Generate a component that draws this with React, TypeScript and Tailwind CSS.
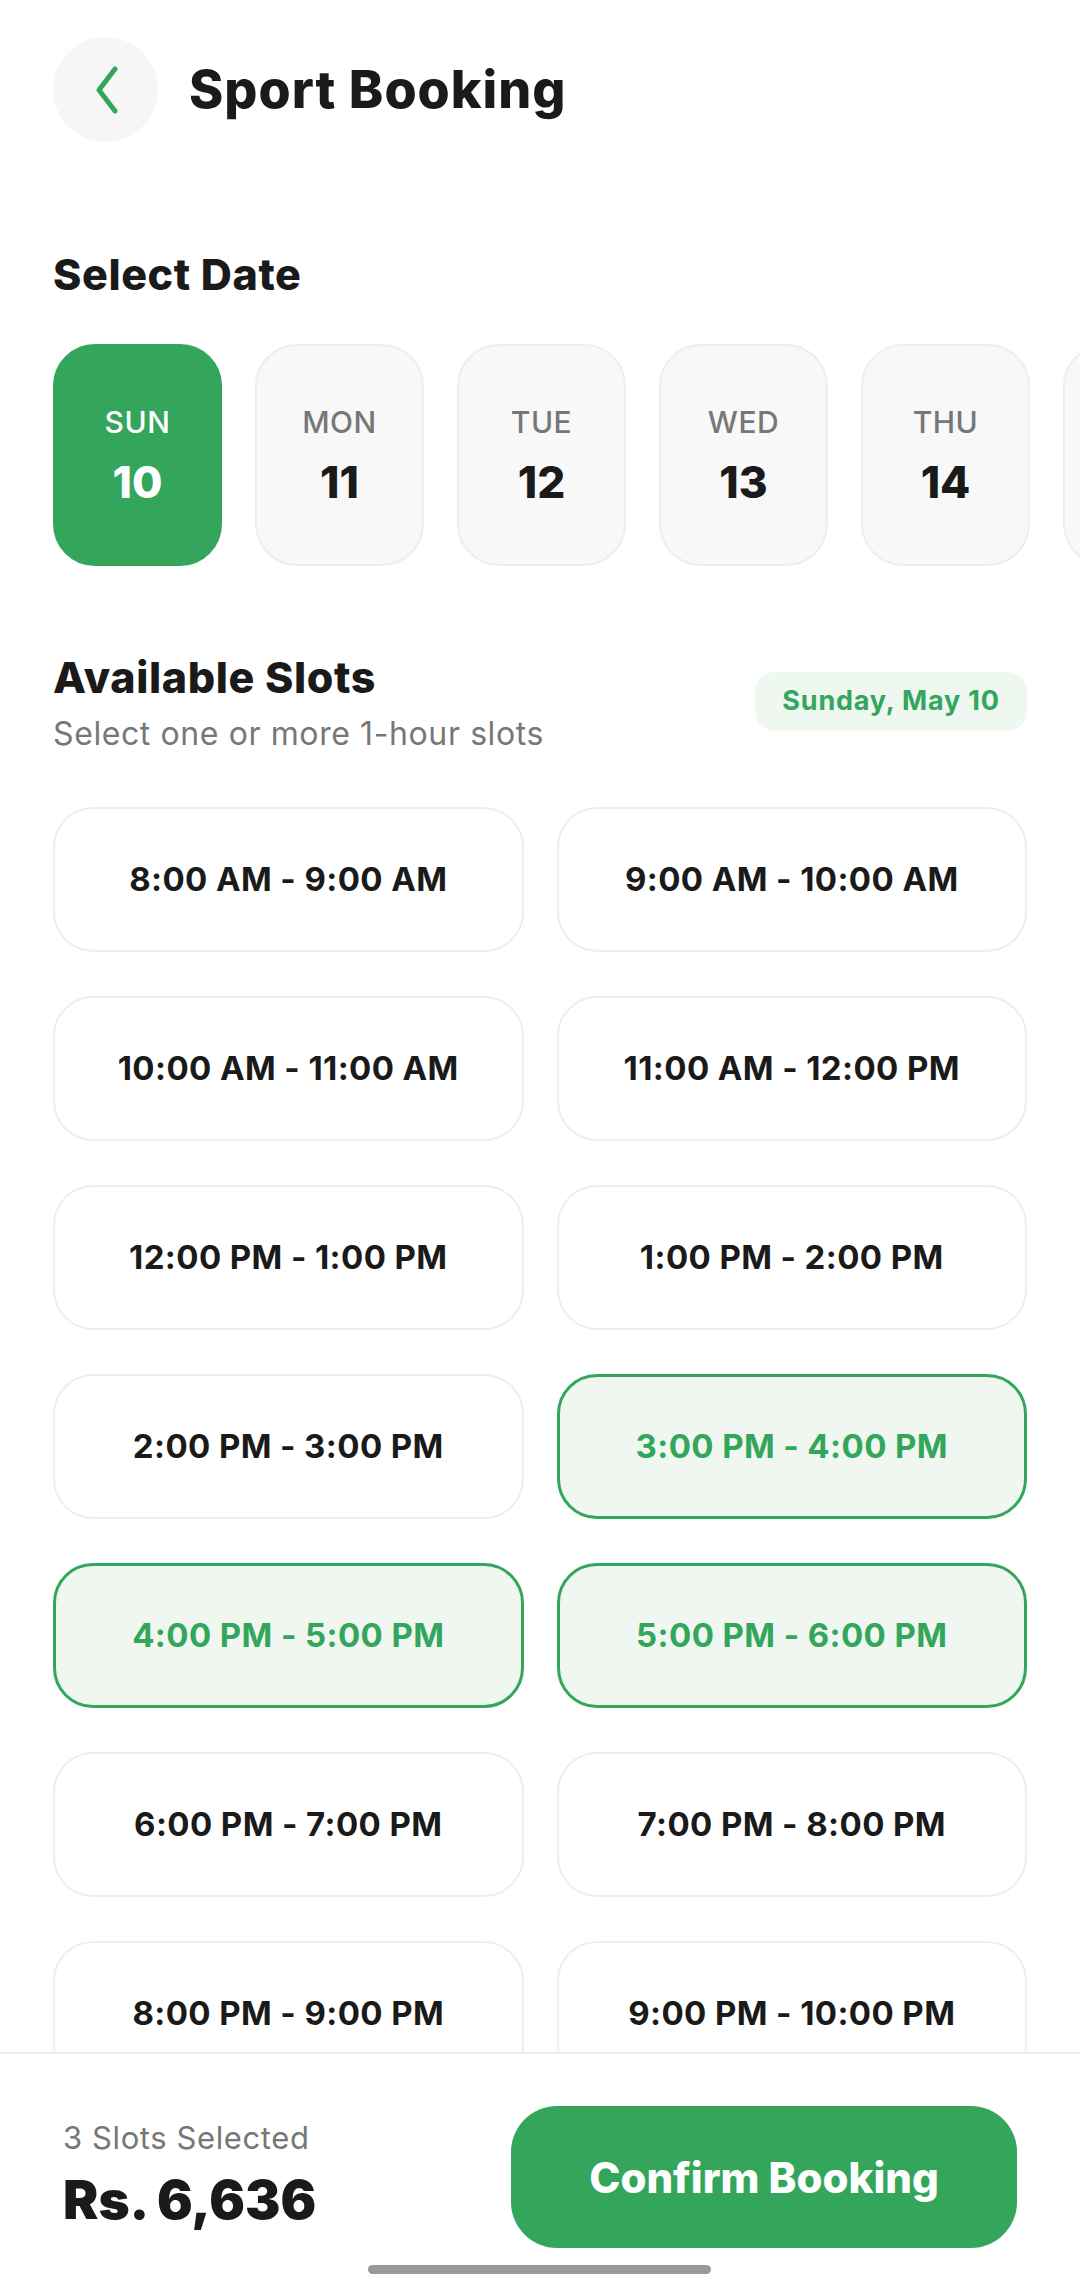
import { useState } from 'react';

interface Day {
    label: string;
    num: number;
}

const days: Day[] = [
    { label: 'SUN', num: 10 },
    { label: 'MON', num: 11 },
    { label: 'TUE', num: 12 },
    { label: 'WED', num: 13 },
    { label: 'THU', num: 14 },
];

const slots = [
    '8:00 AM - 9:00 AM',
    '9:00 AM - 10:00 AM',
    '10:00 AM - 11:00 AM',
    '11:00 AM - 12:00 PM',
    '12:00 PM - 1:00 PM',
    '1:00 PM - 2:00 PM',
    '2:00 PM - 3:00 PM',
    '3:00 PM - 4:00 PM',
    '4:00 PM - 5:00 PM',
    '5:00 PM - 6:00 PM',
    '6:00 PM - 7:00 PM',
    '7:00 PM - 8:00 PM',
    '8:00 PM - 9:00 PM',
    '9:00 PM - 10:00 PM',
];

export default function App() {
    const [selectedDay, setSelectedDay] = useState(10);
    const [selected, setSelected] = useState<string[]>(['3:00 PM - 4:00 PM', '4:00 PM - 5:00 PM', '5:00 PM - 6:00 PM']);

    const toggle = (slot: string) => {
        setSelected((prev) => (prev.includes(slot) ? prev.filter((s) => s !== slot) : [...prev, slot]));
    };

    const total = selected.length * 2212;

    return (
        <div className="relative h-[2290px] w-full overflow-hidden bg-white font-['Inter',sans-serif] text-[#1a1a1a]">
            {/* header */}
            <div className="flex items-center gap-[31px] px-[53px] pt-[37px]">
                <button className="flex h-[105px] w-[105px] items-center justify-center rounded-full bg-[#f6f6f6]">
                    <svg width="30" height="48" viewBox="0 0 30 48" fill="none">
                        <polyline points="24,3 8,24 24,45" stroke="#33a65c" strokeWidth="5" strokeLinecap="round" strokeLinejoin="round" />
                    </svg>
                </button>
                <h1 className="text-[52px] font-extrabold leading-none tracking-[1px]">Sport Booking</h1>
            </div>

            {/* dates */}
            <h2 className="mt-[107px] px-[53px] text-[43px] font-extrabold leading-[50px] tracking-[0.6px]">Select Date</h2>
            <div className="mt-[45px] flex gap-[33px] overflow-hidden pl-[53px]">
                {days.map((d) => {
                    const active = d.num === selectedDay;
                    return (
                        <button
                            key={d.num}
                            onClick={() => setSelectedDay(d.num)}
                            className={`flex h-[222px] w-[169px] shrink-0 flex-col items-center justify-center rounded-[42px] border-2 ${
                                active ? 'border-[#33a65c] bg-[#33a65c] text-white' : 'border-[#eeeeee] bg-[#f8f8f8]'
                            }`}
                        >
                            <span className={`text-[30px] font-medium leading-none tracking-[0.5px] ${active ? 'text-white' : 'text-[#777777]'}`}>{d.label}</span>
                            <span className="mt-[23px] text-[44px] font-extrabold leading-none">{d.num}</span>
                        </button>
                    );
                })}
                <div className="h-[222px] w-[169px] shrink-0 rounded-[42px] border-2 border-[#eeeeee] bg-[#f8f8f8]" />
            </div>

            {/* slots */}
            <div className="mt-[86px] flex items-start justify-between px-[53px]">
                <div>
                    <h2 className="text-[43px] font-extrabold leading-[50px] tracking-[0.6px]">Available Slots</h2>
                    <p className="mt-[14px] text-[32px] leading-[36px] tracking-[0.6px] text-[#777777]">Select one or more 1-hour slots</p>
                </div>
                <span className="mt-[20px] flex h-[59px] w-[272px] items-center justify-center rounded-[20px] bg-[#eef7f0] text-[27px] font-bold tracking-[0.8px] text-[#33a65c]">
                    Sunday, May 10
                </span>
            </div>

            <div className="mt-[55px] grid grid-cols-2 gap-x-[33px] gap-y-[44px] px-[53px]">
                {slots.map((slot) => {
                    const on = selected.includes(slot);
                    return (
                        <button
                            key={slot}
                            onClick={() => toggle(slot)}
                            className={`flex h-[145px] items-center justify-center rounded-[40px] text-[33px] font-bold tracking-[0.4px] ${
                                on ? 'border-[3px] border-[#33a65c] bg-[#eff7f0] text-[#33a65c]' : 'border-2 border-[#eeeeee] bg-white'
                            }`}
                        >
                            {slot}
                        </button>
                    );
                })}
            </div>

            {/* bottom bar */}
            <div className="absolute inset-x-0 bottom-0 h-[238px] border-t-2 border-[#eeeeee] bg-white">
                <div className="flex items-start justify-between px-[63px] pt-[52px]">
                    <div className="pt-[14px]">
                        <p className="text-[31px] leading-[36px] tracking-[0.6px] text-[#777777]">{selected.length} Slots Selected</p>
                        <p className="mt-[18px] text-[53px] font-black leading-none">Rs. {total.toLocaleString('en-US')}</p>
                    </div>
                    <button className="flex h-[142px] w-[506px] items-center justify-center rounded-[46px] bg-[#33a65c] text-[42px] font-extrabold text-white">
                        Confirm Booking
                    </button>
                </div>
                <div className="absolute bottom-[16px] left-[368px] h-[9px] w-[343px] rounded-full bg-[#999999]" />
            </div>
        </div>
    );
}
